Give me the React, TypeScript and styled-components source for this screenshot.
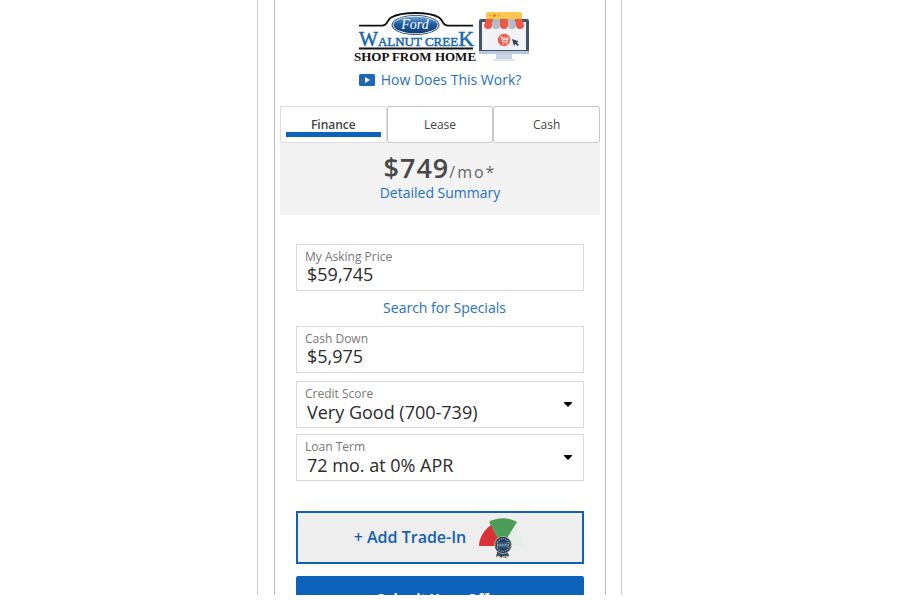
import React, { useState } from "react";
import styled, { createGlobalStyle } from "styled-components";

const GlobalStyle = createGlobalStyle`
  *, *::before, *::after { box-sizing: border-box; }
  body {
    margin: 0;
    background: #fff;
    color: #333;
    font-family: "Open Sans", "Noto Sans", sans-serif;
    font-size: 14px;
    overflow: hidden;
  }
  button, input, select { font: inherit; color: inherit; }
`;

const Page = styled.main`
  height: calc(100vh - 5px);
  overflow: hidden;
  padding-right: 21px;
`;

const Frame = styled.div`
  max-width: 365px;
  min-height: 100%;
  margin: 0 auto;
  padding: 0 15px 0 16px;
  border: solid #ccc;
  border-width: 0 1px;
`;

const Panel = styled.div`
  min-height: 100%;
  padding: 0 5px;
  border: solid #bbb;
  border-width: 0 1px;
`;

const Header = styled.header`
  display: flex;
  flex-direction: column;
  align-items: center;
  padding-top: 8px;
  height: 106px;
`;

const Brand = styled.div`
  display: flex;
  height: 60px;
  padding-left: 4px;
`;

const Link = styled.a`
  display: inline-flex;
  align-items: center;
  gap: 6px;
  color: #2472c0;
  line-height: 20px;
  text-decoration: none;
`;

const HelpLink = styled(Link)`
  margin-top: 2px;
`;

const Tabs = styled.div`
  display: grid;
  grid-template-columns: repeat(3, 1fr);
`;

const Tab = styled.button<{ $active: boolean }>`
  height: 37px;
  padding: 2px 5px 5px;
  border: 1px solid ${(p) => (p.$active ? "#ddd" : "#c8c8c8")};
  border-radius: 2px;
  background: #fff;
  color: #444;
  font-size: 12px;
  font-weight: ${(p) => (p.$active ? 600 : 400)};
  line-height: 20px;
`;

const TabLabel = styled.span<{ $active: boolean }>`
  display: block;
  height: 28px;
  padding-top: 7px;
  line-height: 18px;
  border-bottom: 5px solid ${(p) => (p.$active ? "#0d62bb" : "transparent")};
`;

const Summary = styled.section`
  display: flex;
  flex-direction: column;
  align-items: center;
  height: 72px;
  padding-top: 10px;
  background: #f3f3f3;
`;

const Payment = styled.div`
  height: 30px;
  color: #484848;
  font-size: 27px;
  font-weight: 600;
  line-height: 30px;
  letter-spacing: 1px;
`;

const Period = styled.span`
  color: #666;
  font-size: 16px;
  font-weight: 400;
  letter-spacing: 2px;
`;

const Form = styled.form`
  display: flex;
  flex-direction: column;
  padding: 29px 16px 0;
`;

const Field = styled.label<{ $gap: number }>`
  display: flex;
  flex-direction: column;
  height: 47px;
  margin-bottom: ${(p) => p.$gap}px;
  padding: 4px 8px 0;
  border: 1px solid #d9d9d9;
`;

const FieldName = styled.span`
  color: #777;
  font-size: 12px;
  line-height: 16px;
`;

const TextBox = styled.input`
  width: 100%;
  height: 18px;
  padding: 0 2px;
  border: 0;
  outline: 0;
  background: transparent;
  color: #2b2b2b;
  font-size: 18px;
`;

const Choice = styled.span`
  display: flex;
  align-items: center;
  height: 20px;
  padding-right: 3px;
`;

const Select = styled.select`
  flex: 1;
  min-width: 0;
  height: 22px;
  padding: 0 2px;
  border: 0;
  outline: 0;
  appearance: none;
  background: transparent;
  color: #2b2b2b;
  font-size: 18px;
  line-height: 22px;
`;

const Caret = styled.svg`
  width: 8px;
  height: 6px;
  margin-bottom: 14px;
  pointer-events: none;
`;

const SpecialsLink = styled(Link)`
  align-self: center;
  height: 35px;
  padding: 0 0 2px 9px;
`;

const TradeButton = styled.button`
  display: flex;
  justify-content: center;
  align-items: center;
  gap: 12px;
  height: 53px;
  margin-top: 30px;
  padding: 0 0 2px;
  border: 2px solid #1261b0;
  background: #eee;
  color: #1261b0;
  font-size: 16px;
  font-weight: 600;
`;

const SubmitButton = styled.button`
  height: 44px;
  margin-top: 12px;
  border: 0;
  border-radius: 2px;
  background: #0d62bb;
  color: #fff;
  font-size: 14px;
  font-weight: 700;
`;

const DealerLogo = () => (
  <svg width="126" height="60" viewBox="0 0 126 60" role="img" aria-label="Ford Walnut Creek Shop From Home">
    <defs>
      <linearGradient id="oval" x1="0" y1="0" x2="0" y2="1">
        <stop offset="0" stopColor="#6ea6d5" />
        <stop offset=".45" stopColor="#1d5d9f" />
        <stop offset="1" stopColor="#123b75" />
      </linearGradient>
    </defs>
    <path d="M6 17.700H29C35 17.700 33 13 38 9.500C49 3.500 76 3.500 86 9.500C91 13 89 17.700 95 17.700H120" fill="none" stroke="#111" strokeWidth="1.800" />
    <ellipse cx="62.500" cy="17" rx="24" ry="10" fill="#23415f" />
    <ellipse cx="62.500" cy="17" rx="23" ry="9.200" fill="#e5edf4" />
    <ellipse cx="62.500" cy="17" rx="22" ry="8.300" fill="url(#oval)" />
    <text x="62" y="21" textAnchor="middle" fontFamily="Liberation Serif, serif" fontSize="14" fontStyle="italic" fill="#fff">Ford</text>
    <text x="6" y="37.500" fontFamily="Liberation Serif, serif" fill="#1768ae" stroke="#1768ae" strokeWidth=".5">
      <tspan fontSize="20">W</tspan><tspan fontSize="13">ALNUT CREE</tspan><tspan fontSize="22">K</tspan>
    </text>
    <path d="M6 40.500H120" stroke="#111" strokeWidth="1.800" />
    <text x="1" y="53" fontFamily="Liberation Serif, serif" fontSize="13" fontWeight="700" fill="#111">SHOP FROM HOME</text>
  </svg>
);

const awning = ["#ec5747", "#b6bac4", "#ec5747", "#b6bac4", "#ec5747"];

const StoreIcon = () => (
  <svg width="52" height="60" viewBox="0 0 52 60" aria-hidden="true">
    <path d="M17 46H33V52H17Z" fill="#c9d5e3" />
    <path d="M14 52H36" stroke="#e1e6ed" strokeWidth="2" />
    <rect x="0" y="11" width="50" height="35" rx="2" fill="#455468" />
    <rect x="3" y="14" width="44" height="28" fill="#f1f2f5" />
    <path d="M0 43H50V44Q50 46 48 46H2Q0 46 0 44Z" fill="#b8cadb" />
    <path d="M7 11V6Q7 4 9 4H41Q43 4 43 6V11Z" fill="#fdc74d" />
    <circle cx="11" cy="7.500" r=".8" fill="#ef7c3c" /><circle cx="15.500" cy="7.500" r="1.400" fill="#ef7c3c" /><circle cx="20" cy="7.500" r=".8" fill="#ef7c3c" />
    {awning.map((color, i) => (
      <path key={i} d={`M${7 + i * 7.2} 11H${14.2 + i * 7.2}L${13 + i * 8} 17A4 4 0 0 1 ${5 + i * 8} 17Z`} fill={color} />
    ))}
    <circle cx="25" cy="32" r="6.200" fill="#ed5f4b" />
    <path d="M20.800 28.800H22.500L24 34H28L29.300 30H23M24 31.700H28.700" fill="none" stroke="#fff" strokeWidth=".9" />
    <circle cx="24.300" cy="35.700" r=".7" fill="#fff" /><circle cx="28" cy="35.700" r=".7" fill="#fff" />
    <path d="M33 31L39.500 33.300L37.800 34.700L40 37L38.300 38L36.300 35.800L35 38Z" fill="#344456" />
  </svg>
);

const VideoIcon = () => (
  <svg width="16" height="12" viewBox="0 0 16 12" aria-hidden="true">
    <rect width="16" height="12" rx="1.500" fill="#1e66b8" />
    <path d="M6 3L11 6L6 9Z" fill="#fff" />
  </svg>
);

const GaugeIcon = () => (
  <svg width="48" height="44" viewBox="0 0 48 44" aria-hidden="true">
    <path d="M24 31L46 31A23 23 0 0 0 36 12Z" fill="#e5efe9" />
    <path d="M24 31H1C1 23 6 15 13 10Z" fill="#d93337" />
    <path d="M24 31L11 7C19 2 31 2 39 7Z" fill="#4c9d57" />
    <path d="M20 33L18 42L21 41L23 43L25 41L27 43L31 41L28 33Z" fill="#294d68" />
    <path d="M18 42L21 41L23 43M25 43L27 41L31 42" fill="none" stroke="#cdbb82" />
    <circle cx="25" cy="30" r="9" fill="#d2bd80" />
    <circle cx="25" cy="30" r="8.200" fill="#173f67" />
    <circle cx="25" cy="30" r="6.300" fill="none" stroke="#a4b09f" strokeWidth="1.200" strokeDasharray="1.200 1" />
    <path d="M17.500 28H32.500V32H17.500Z" fill="#204978" stroke="#a89e70" strokeWidth=".5" />
    <path d="M19 30H31" stroke="#8fa9bd" strokeWidth="2" strokeDasharray="1 .6" />
  </svg>
);

const DownCaret = () => (
  <Caret viewBox="0 0 8 6" aria-hidden="true"><path d="M0 0H8V1L4 5L0 1Z" fill="#000" /></Caret>
);

const modes = ["Finance", "Lease", "Cash"];

export default function App() {
  const [mode, setMode] = useState("Finance");
  return (
    <>
      <GlobalStyle />
      <Page>
        <Frame>
          <Panel>
            <Header>
              <Brand><DealerLogo /><StoreIcon /></Brand>
              <HelpLink href="#how"><VideoIcon />How Does This Work?</HelpLink>
            </Header>
            <Tabs role="tablist">
              {modes.map((name) => (
                <Tab key={name} type="button" role="tab" aria-selected={mode === name} $active={mode === name} onClick={() => setMode(name)}>
                  <TabLabel $active={mode === name}>{name}</TabLabel>
                </Tab>
              ))}
            </Tabs>
            <Summary>
              <Payment>$749<Period>/mo*</Period></Payment>
              <Link href="#summary">Detailed Summary</Link>
            </Summary>
            <Form onSubmit={(e) => e.preventDefault()}>
              <Field $gap={0}>
                <FieldName>My Asking Price</FieldName>
                <TextBox defaultValue="$59,745" />
              </Field>
              <SpecialsLink href="#specials">Search for Specials</SpecialsLink>
              <Field $gap={8}>
                <FieldName>Cash Down</FieldName>
                <TextBox defaultValue="$5,975" />
              </Field>
              <Field $gap={6}>
                <FieldName>Credit Score</FieldName>
                <Choice>
                  <Select defaultValue="good"><option value="good">Very Good (700-739)</option></Select>
                  <DownCaret />
                </Choice>
              </Field>
              <Field $gap={0}>
                <FieldName>Loan Term</FieldName>
                <Choice>
                  <Select defaultValue="72"><option value="72">72 mo. at 0% APR</option></Select>
                  <DownCaret />
                </Choice>
              </Field>
              <TradeButton type="button">+ Add Trade-In<GaugeIcon /></TradeButton>
              <SubmitButton type="submit">Submit Your Offer</SubmitButton>
            </Form>
          </Panel>
        </Frame>
      </Page>
    </>
  );
}
